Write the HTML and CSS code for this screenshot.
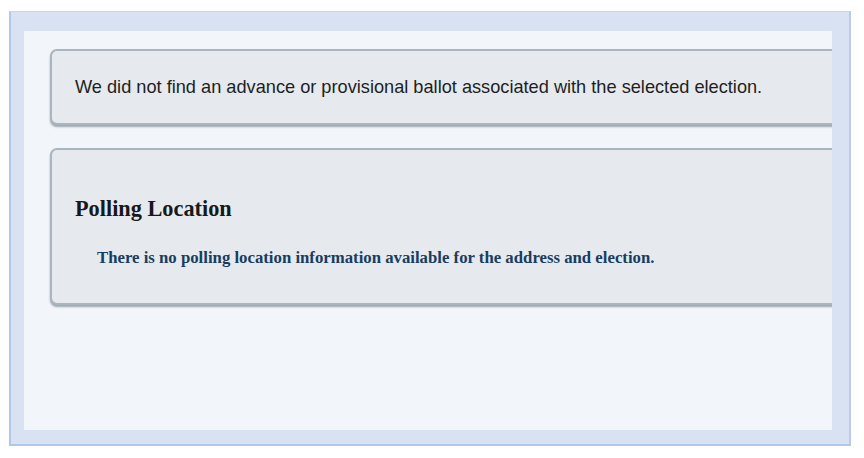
FILE: index.html
```html
<!DOCTYPE html>
<html>
<head>
<meta charset="utf-8">
<link rel="stylesheet" href="styles.css">
</head>
<body>
<div class="frame">
  <div class="panel">
    <div class="card card-notice">
      <p class="notice">We did not find an advance or provisional ballot associated with the selected election.</p>
    </div>
    <div class="card card-polling">
      <h2 class="title">Polling Location</h2>
      <p class="info">There is no polling location information available for the address and election.</p>
    </div>
  </div>
</div>
</body>
</html>
```

FILE: styles.css
```css
html, body {
  margin: 0;
  padding: 0;
  background: #ffffff;
}
body {
  width: 864px;
  height: 458px;
  overflow: hidden;
}
.frame {
  box-sizing: border-box;
  margin: 11px 0 0 9px;
  width: 842px;
  height: 435px;
  background: #d8e2f3;
  border: 1px solid #c9d7ee;
  border-left: 2px solid #b1c7e8;
  border-bottom: 2px solid #b1c7e8;
  border-right: 2px solid #b7cbea;
  padding: 19px 17px 14px 13px;
}
.panel {
  box-sizing: border-box;
  width: 808px;
  height: 399px;
  background: #f2f5f9;
  overflow: hidden;
  padding: 18px 0 0 26px;
  display: flex;
  flex-direction: column;
  gap: 23px;
}
.card {
  box-sizing: border-box;
  width: 830px;
  flex: none;
  background: #e6eaef;
  border: 2px solid #a9b5bf;
  border-radius: 7px;
  box-shadow: 0 2px 2px rgba(60, 70, 80, 0.45);
}
.card-notice {
  height: 76px;
  display: flex;
  align-items: center;
  padding-left: 23px;
}
.notice {
  margin: 0;
  font-family: "Liberation Sans", Arial, sans-serif;
  font-size: 18.2px;
  color: #1d1f22;
}
.card-polling {
  height: 157px;
  padding: 46px 0 0 23px;
}
.title {
  margin: 0;
  font-family: "Liberation Serif", "Times New Roman", serif;
  font-weight: bold;
  font-size: 22.3px;
  line-height: 26px;
  color: #16191c;
}
.info {
  margin: 26px 0 0 22px;
  font-family: "Liberation Serif", "Times New Roman", serif;
  font-weight: bold;
  font-size: 16.75px;
  line-height: 20px;
  color: #173d60;
}
```
